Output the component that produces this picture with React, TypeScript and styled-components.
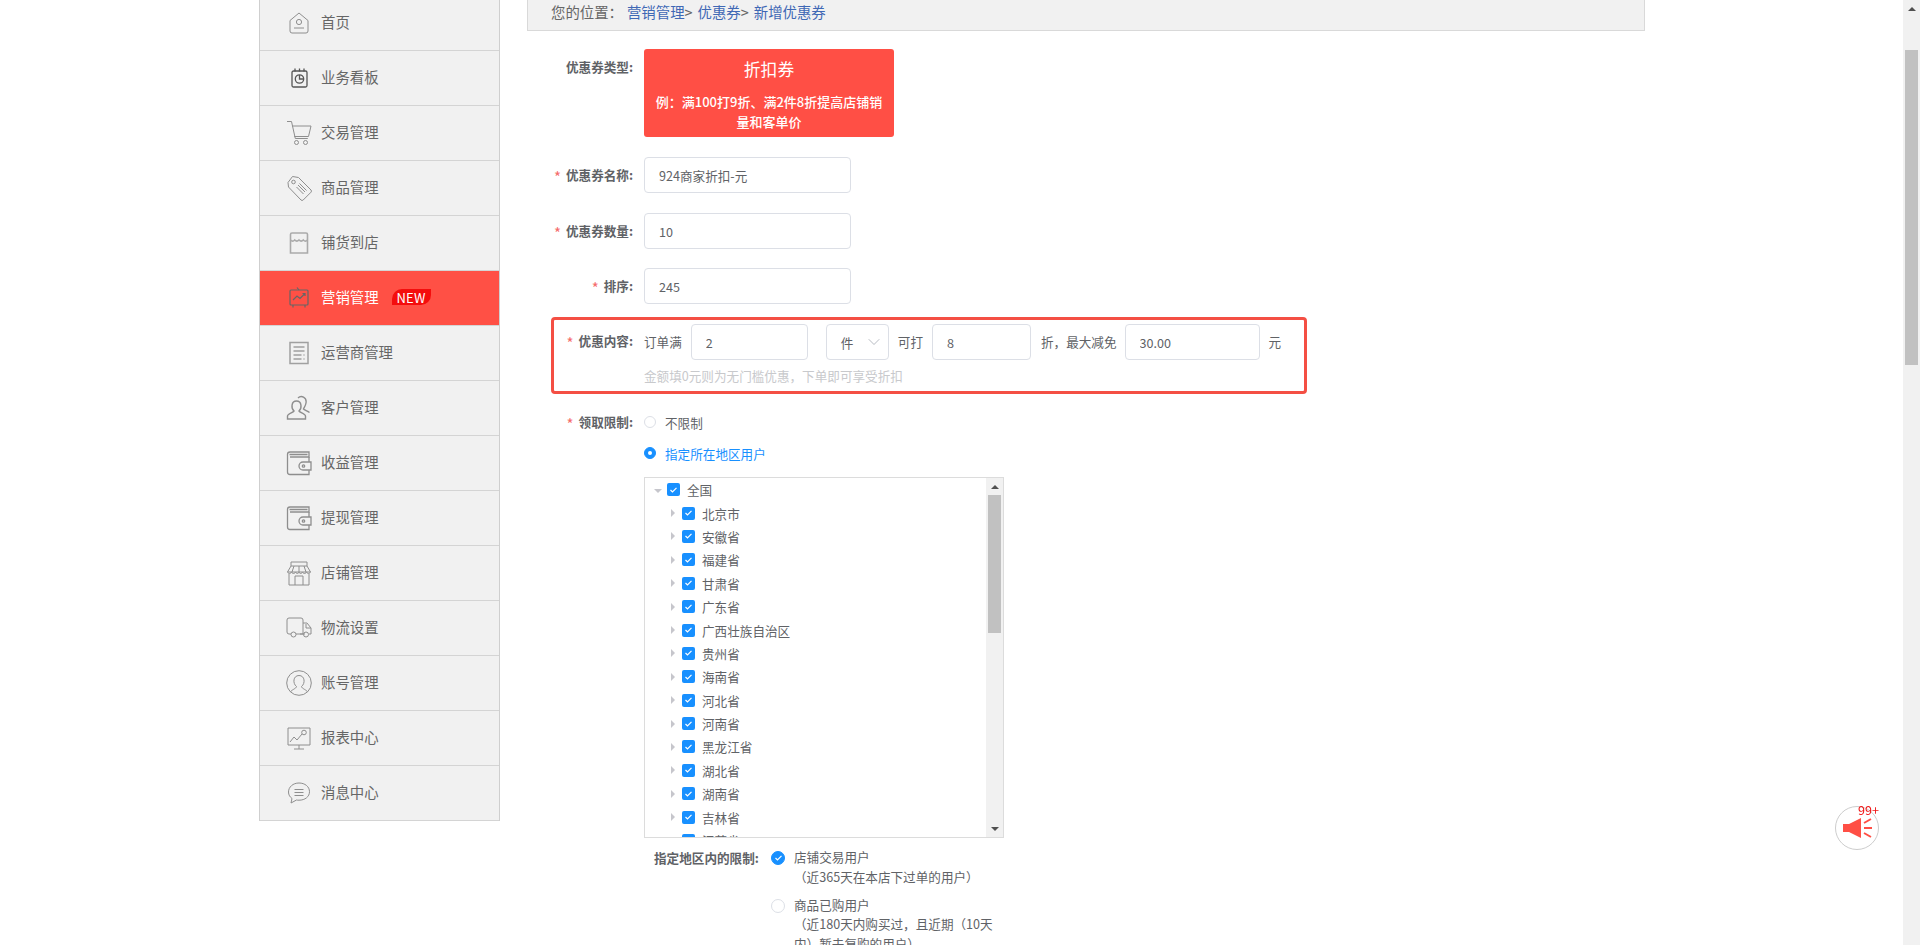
import React from 'react';
import styled, { createGlobalStyle } from 'styled-components';
import { ChevronDown } from 'lucide-react';

const GlobalStyle = createGlobalStyle`
  html, body {
    margin: 0;
    height: 100%;
    overflow: hidden;
    background: #fff;
  }
  * {
    box-sizing: border-box;
  }
  body, input {
    font-family: "Noto Sans CJK SC", "Noto Sans", sans-serif;
    font-size: 12.6px;
    color: #606266;
  }
`;

const Root = styled.div`
  display: flex;
  height: 945px;
  overflow: hidden;
`;

const Page = styled.div`
  flex: 1;
  display: flex;
  align-items: flex-start;
  padding-left: 259px;
  overflow: hidden;
`;

const Sidebar = styled.nav`
  width: 241px;
  margin-top: -4px;
  flex-shrink: 0;
  border-left: 1px solid #cfcfcf;
  border-right: 1px solid #cfcfcf;
`;

const MenuRow = styled.div<{ $active?: boolean }>`
  height: 55px;
  display: flex;
  align-items: center;
  gap: 9px;
  padding-left: 26px;
  font-size: 14.4px;
  color: ${({ $active }) => ($active ? '#fff' : '#666')};
  background: ${({ $active }) => ($active ? '#ff5045' : '#f1f1f1')};
  border-bottom: 1px solid #d4d4d4;
  svg {
    flex-shrink: 0;
  }
`;

const MenuLabel = styled.span`
  padding-bottom: 3px;
`;

const NewBadge = styled.span`
  display: inline-flex;
  align-items: center;
  justify-content: center;
  width: 39px;
  height: 16px;
  margin: 0 0 2px 4px;
  font-size: 13px;
  letter-spacing: 0.3px;
  color: #fff;
  background: #f40d0d;
  border-radius: 10px 0 10px 0;
`;

const Main = styled.main`
  width: 1118px;
  margin-left: 27px;
  flex-shrink: 0;
`;

const Breadcrumb = styled.div`
  height: 31px;
  display: flex;
  align-items: center;
  padding: 0 0 7px 23px;
  font-size: 14.4px;
  color: #666;
  background: #f1f1f1;
  border: 1px solid #d9d9d9;
  border-top: none;
`;

const Crumb = styled.span`
  margin-left: 5px;
  color: #3f68b5;
  em {
    font-style: normal;
    color: #666;
  }
  &:first-of-type {
    margin-left: 4px;
  }
`;

const Form = styled.form`
  padding-top: 18px;
`;

const FormRow = styled.div<{ $mb?: number }>`
  display: flex;
  align-items: flex-start;
  margin-bottom: ${({ $mb }) => $mb ?? 20}px;
`;

const Label = styled.div<{ $width?: number; $line?: number }>`
  width: ${({ $width }) => $width ?? 117}px;
  flex-shrink: 0;
  padding-right: 11px;
  text-align: right;
  line-height: ${({ $line }) => $line ?? 36}px;
  font-weight: 700;
  color: #606266;
  i {
    margin-right: 5px;
    font-size: 15px;
    line-height: 0;
    vertical-align: -3px;
    font-style: normal;
    font-weight: 400;
    color: #f56c6c;
  }
`;

const TypeCard = styled.div`
  width: 250px;
  height: 88px;
  padding: 8px 6px 0;
  text-align: center;
  color: #fff;
  background: #ff4f45;
  border-radius: 3px;
`;

const TypeTitle = styled.div`
  font-size: 16.8px;
  line-height: 24px;
  margin-bottom: 11px;
`;

const TypeDesc = styled.div`
  font-size: 13px;
  font-weight: 500;
  line-height: 20px;
`;

const TextInput = styled.input<{ $width?: number; $ml?: number }>`
  width: ${({ $width }) => $width ?? 207}px;
  height: 36px;
  margin-left: ${({ $ml }) => $ml ?? 0}px;
  padding: 0 14px;
  flex-shrink: 0;
  font-size: 12.6px;
  color: #606266;
  background: #fff;
  border: 1px solid #dcdfe6;
  border-radius: 4px;
  outline: none;
`;

const Highlight = styled.div`
  width: 756px;
  height: 77px;
  margin: 0 0 18px 24px;
  padding-top: 4px;
  border: 3px solid #f44f44;
  border-radius: 4px;
`;

const HighlightInner = styled.div`
  display: flex;
  align-items: flex-start;
`;

const ContentColumn = styled.div`
  display: flex;
  flex-direction: column;
`;

const InlineFields = styled.div`
  display: flex;
  align-items: center;
  height: 36px;
`;

const InlineText = styled.span<{ $ml?: number }>`
  margin-left: ${({ $ml }) => $ml ?? 0}px;
  padding-bottom: 2px;
  white-space: nowrap;
  color: #606266;
`;

const UnitSelect = styled.div`
  width: 63px;
  height: 36px;
  margin-left: 18px;
  display: flex;
  align-items: center;
  justify-content: space-between;
  padding: 0 4px 0 14px;
  color: #606266;
  border: 1px solid #dcdfe6;
  border-radius: 4px;
`;

const Hint = styled.div`
  margin-top: 6px;
  line-height: 20px;
  color: #c8c9cc;
`;

const RadioRow = styled.div<{ $active?: boolean; $mb?: number }>`
  height: 20px;
  display: flex;
  align-items: center;
  gap: 9px;
  margin-bottom: ${({ $mb }) => $mb ?? 0}px;
  color: ${({ $active }) => ($active ? '#1890ff' : '#606266')};
`;

const RadioDot = styled.span<{ $checked?: boolean }>`
  width: 12px;
  height: 12px;
  flex-shrink: 0;
  display: inline-flex;
  align-items: center;
  justify-content: center;
  border-radius: 50%;
  border: 1px solid ${({ $checked }) => ($checked ? '#1890ff' : '#dcdfe6')};
  background: ${({ $checked }) => ($checked ? '#1890ff' : '#fff')};
  &::after {
    content: '';
    display: ${({ $checked }) => ($checked ? 'block' : 'none')};
    width: 4px;
    height: 4px;
    border-radius: 50%;
    background: #fff;
  }
`;

const TreeBox = styled.div`
  width: 360px;
  height: 361px;
  margin-top: 14px;
  display: flex;
  border: 1px solid #dcdcdc;
  overflow: hidden;
`;

const TreeList = styled.div`
  flex: 1;
  overflow: hidden;
`;

const TreeNode = styled.div<{ $depth: number }>`
  height: 23.4px;
  display: flex;
  align-items: center;
  padding-left: ${({ $depth }) => ($depth ? 26 : 9)}px;
  color: #606266;
`;

const TreeRight = styled.span`
  width: 0;
  height: 0;
  margin-right: 7px;
  border-top: 4px solid transparent;
  border-bottom: 4px solid transparent;
  border-left: 4px solid #c6c6cc;
`;

const TreeDown = styled.span`
  width: 0;
  height: 0;
  margin-right: 5px;
  margin-top: 2px;
  border-left: 4px solid transparent;
  border-right: 4px solid transparent;
  border-top: 4px solid #c6c6cc;
`;

const CheckBox = styled.span`
  width: 13px;
  height: 13px;
  margin-right: 7px;
  display: inline-flex;
  align-items: center;
  justify-content: center;
  flex-shrink: 0;
  background: #1890ff;
  border-radius: 2px;
`;

const ScrollTrack = styled.div`
  width: 17px;
  flex-shrink: 0;
  height: 100%;
  display: flex;
  flex-direction: column;
  align-items: center;
  background: #f1f1f1;
`;

const ScrollArrow = styled.div<{ $down?: boolean }>`
  height: 17px;
  width: 100%;
  flex-shrink: 0;
  display: flex;
  align-items: center;
  justify-content: center;
  margin-top: ${({ $down }) => ($down ? 'auto' : '0')};
  &::after {
    content: '';
    width: 0;
    height: 0;
    border-left: 4px solid transparent;
    border-right: 4px solid transparent;
    ${({ $down }) =>
      $down ? 'border-top: 4px solid #505050;' : 'border-bottom: 4px solid #505050;'}
  }
`;

const ScrollThumb = styled.div<{ $top: number; $height: number }>`
  width: 13px;
  height: ${({ $height }) => $height}px;
  margin-top: ${({ $top }) => $top}px;
  flex-shrink: 0;
  background: #c1c1c1;
`;

const RestrictRow = styled.div`
  display: flex;
  align-items: flex-start;
  margin: 11px 0 0 10px;
`;

const RestrictLabel = styled.div`
  width: 117px;
  flex-shrink: 0;
  font-weight: 700;
  line-height: 18px;
  white-space: nowrap;
`;

const RestrictOptions = styled.div`
  width: 232px;
  display: flex;
  flex-direction: column;
  gap: 10px;
`;

const RestrictOption = styled.div`
  display: flex;
  gap: 9px;
`;

const RoundTick = styled.span<{ $checked?: boolean }>`
  width: 14px;
  height: 14px;
  margin-top: 2px;
  flex-shrink: 0;
  display: inline-flex;
  align-items: center;
  justify-content: center;
  border-radius: 50%;
  border: 1px solid ${({ $checked }) => ($checked ? '#1890ff' : '#dcdfe6')};
  background: ${({ $checked }) => ($checked ? '#1890ff' : '#fff')};
`;

const OptionText = styled.div`
  width: 209px;
  margin-top: -2px;
  line-height: 19.8px;
  color: #606266;
`;

const FloatButton = styled.div`
  position: fixed;
  left: 1835px;
  top: 806px;
  width: 44px;
  height: 44px;
  display: flex;
  align-items: center;
  justify-content: center;
  background: #fff;
  border: 1px solid #ccc;
  border-radius: 50%;
`;

const FloatCount = styled.span`
  position: absolute;
  top: -4px;
  right: -1px;
  font-size: 12.6px;
  line-height: 14px;
  color: #f01414;
`;

const Tick = () => (
  <svg width="9" height="8" viewBox="0 0 9 8">
    <path d="M1.5 4l2 2 4-4.2" fill="none" stroke="#fff" strokeWidth="1.2" />
  </svg>
);

const icons: Record<string, React.ReactNode> = {
  home: (
    <>
      <path d="M4 10.5 13 3l9 7.5V21a2 2 0 0 1-2 2H6a2 2 0 0 1-2-2z" />
      <circle cx="13" cy="12" r="2.6" />
      <path d="M8 18h10" />
    </>
  ),
  board: (
    <g stroke="#555" strokeWidth="1.3">
      <rect x="6" y="6" width="15" height="16" rx="1.5" />
      <path d="M9 3.5v3M13.5 3.5v3M18 3.5v3" />
      <circle cx="13.5" cy="14" r="4.2" />
      <path d="M13.5 10v4h4" />
    </g>
  ),
  cart: (
    <>
      <path d="M1 1.5h4.5l3.8 17h12.5" />
      <path d="M6 6h19l-2.5 10.5H8.3" />
      <circle cx="10.5" cy="22.5" r="2" />
      <circle cx="19.5" cy="22.5" r="2" />
    </>
  ),
  tag: (
    <>
      <path d="M2 7.5 6.5 1.5l6 1 12.5 12.5a1.6 1.6 0 0 1 0 2.2l-7.8 7.8a1.6 1.6 0 0 1-2.2 0L2.5 12z" />
      <circle cx="7.5" cy="7" r="1.8" />
      <path d="m12 10 7 7M10.5 12l7 7M13.5 8.500l7 7" />
    </>
  ),
  store: (
    <g stroke="#aaa" strokeWidth="1.6">
      <path d="M4.500 10V4.500A1.500 1.500 0 0 1 6 3h14a1.500 1.500 0 0 1 1.500 1.500V10" />
      <path d="M4.500 10c1.500 1.500 2.800 1.500 4.200 0 1.500 1.500 2.800 1.500 4.300 0 1.500 1.500 2.800 1.500 4.300 0 1.500 1.500 2.800 1.500 4.200 0" />
      <path d="M4.500 10v13h17V10" />
    </g>
  ),
  market: (
    <g stroke="#666" strokeWidth="1.2">
      <rect x="4" y="5" width="18" height="15" rx="1" />
      <path d="M13 5l-2-2.500M7 20v2.500M19 20v2.500" />
      <path d="m7 15 4-4 3 2.500 5-5M16.500 8.500H19V11" />
    </g>
  ),
  doc: (
    <g stroke="#a0a0a0" strokeWidth="1.5">
      <rect x="4" y="2.500" width="18" height="21" />
      <path d="M7.500 7h11M7.500 11h11M7.500 15h8M17.500 15h1M7.500 19h8M17.500 19h1" />
    </g>
  ),
  users: (
    <g strokeWidth="1.4">
      <path d="M1.500 24v-3c0-2 5.500-3.500 6.500-5-3-2.500-3-10 2.500-10S16 13.500 13 16c1 1.500 6.500 3 6.500 5v3z" />
      <path d="M12 3c3-3 9-1 8 5-.5 3-2 4.500-2.500 6 1 1 4 2 6 3.500" />
    </g>
  ),
  wallet: (
    <g strokeWidth="1.3">
      <path d="M1.500 4.500A2.500 2.500 0 0 1 4 2h19v5H4M1.500 4.500V22A2.500 2.500 0 0 0 4 24.500h19V20" />
      <path d="M3.500 4.500h18M25 12h-8a3 3 0 0 0 0 8h8zM23 12V7" />
      <circle cx="17.500" cy="16" r="1.200" />
    </g>
  ),
  shop: (
    <>
      <path d="M5 6V2h16v4M5 6h16l3.500 6H1.500z" />
      <path d="M1.500 12c1 2 3 2 4 0 1 2 3 2 4 0 1 2 3 2 3.500 0 .5 2 2.500 2 3.500 0 1 2 3 2 4 0 1 2 3 2 4 0M8 6l-2 6M13 6v6M18 6l2 6" />
      <path d="M3 14v11h20V14M9 25V16h8v9" />
    </>
  ),
  truck: (
    <>
      <path d="M5 19H3a2 2 0 0 1-2-2V5a2 2 0 0 1 2-2h12a2 2 0 0 1 2 2v14h-7M17 8h4l4 5v6h-2" />
      <path d="M20 9v4h5M14 19h5" />
      <circle cx="7.500" cy="19.500" r="2.500" />
      <circle cx="20" cy="19.500" r="2.500" />
    </>
  ),
  account: (
    <>
      <circle cx="13" cy="13" r="12.300" />
      <path d="M4.500 22c.5-2 6-3.500 6-5.500-4-3-3.500-11 2.500-11s6.500 8 2.500 11c0 2 5.500 3.500 6 5.500" />
    </>
  ),
  report: (
    <>
      <path d="M2 3h22v17H2zM13 20v4M8 24h10" />
      <path d="m4 17 4-5 3 3 5-6" />
      <circle cx="18" cy="7.500" r="2.300" />
    </>
  ),
  chat: (
    <>
      <path d="M13 3C7 3 2.500 7 2.500 12c0 3 1.500 5 3.500 6.500L5 23l5.500-3c1 .2 1.500 .2 2.500 .2 6 0 10.500-3.500 10.500-8.500S19 3 13 3z" />
      <path d="M8.500 9.500h9M8.500 12.500h9M8.500 15.500h9" />
    </>
  ),
};

const MenuIcon = ({ name }: { name: string }) => (
  <svg width="26" height="26" viewBox="0 0 26 26" fill="none" stroke="#8e8e8e" strokeWidth="1">
    {icons[name]}
  </svg>
);

const menu = [
  ['home', '首页'],
  ['board', '业务看板'],
  ['cart', '交易管理'],
  ['tag', '商品管理'],
  ['store', '铺货到店'],
  ['market', '营销管理'],
  ['doc', '运营商管理'],
  ['users', '客户管理'],
  ['wallet', '收益管理'],
  ['wallet', '提现管理'],
  ['shop', '店铺管理'],
  ['truck', '物流设置'],
  ['account', '账号管理'],
  ['report', '报表中心'],
  ['chat', '消息中心'],
];

const provinces = [
  '北京市', '安徽省', '福建省', '甘肃省', '广东省', '广西壮族自治区', '贵州省',
  '海南省', '河北省', '河南省', '黑龙江省', '湖北省', '湖南省', '吉林省', '江苏省',
];

export default function App() {
  return (
    <Root>
      <GlobalStyle />
      <Page>
        <Sidebar>
          {menu.map(([icon, label]) => (
            <MenuRow key={label} $active={label === '营销管理'}>
              <MenuIcon name={icon} />
              <MenuLabel>{label}</MenuLabel>
              {label === '营销管理' && <NewBadge>NEW</NewBadge>}
            </MenuRow>
          ))}
        </Sidebar>
        <Main>
          <Breadcrumb>
            您的位置：
            <Crumb>营销管理<em>&gt;</em></Crumb>
            <Crumb>优惠券<em>&gt;</em></Crumb>
            <Crumb>新增优惠券</Crumb>
          </Breadcrumb>
          <Form>
            <FormRow>
              <Label>优惠券类型:</Label>
              <TypeCard>
                <TypeTitle>折扣券</TypeTitle>
                <TypeDesc>例：满100打9折、满2件8折提高店铺销量和客单价</TypeDesc>
              </TypeCard>
            </FormRow>
            <FormRow>
              <Label><i>*</i>优惠券名称:</Label>
              <TextInput readOnly defaultValue="924商家折扣-元" />
            </FormRow>
            <FormRow $mb={19}>
              <Label><i>*</i>优惠券数量:</Label>
              <TextInput readOnly defaultValue="10" />
            </FormRow>
            <FormRow $mb={13}>
              <Label><i>*</i>排序:</Label>
              <TextInput readOnly defaultValue="245" />
            </FormRow>
            <Highlight>
              <HighlightInner>
                <Label $width={90} $line={34}><i>*</i>优惠内容:</Label>
                <ContentColumn>
                  <InlineFields>
                    <InlineText>订单满</InlineText>
                    <TextInput readOnly defaultValue="2" $width={117} $ml={9} />
                    <UnitSelect>
                      件
                      <ChevronDown size={20} strokeWidth={1} color="#a8adb6" />
                    </UnitSelect>
                    <InlineText $ml={9}>可打</InlineText>
                    <TextInput readOnly defaultValue="8" $width={99} $ml={9} />
                    <InlineText $ml={10}>折，最大减免</InlineText>
                    <TextInput readOnly defaultValue="30.00" $width={135} $ml={8} />
                    <InlineText $ml={9}>元</InlineText>
                  </InlineFields>
                  <Hint>金额填0元则为无门槛优惠，下单即可享受折扣</Hint>
                </ContentColumn>
              </HighlightInner>
            </Highlight>
            <FormRow $mb={0}>
              <Label $line={20}><i>*</i>领取限制:</Label>
              <ContentColumn>
                <RadioRow $mb={11}>
                  <RadioDot />
                  不限制
                </RadioRow>
                <RadioRow $active>
                  <RadioDot $checked />
                  指定所在地区用户
                </RadioRow>
                <TreeBox>
                  <TreeList>
                    <TreeNode $depth={0}>
                      <TreeDown />
                      <CheckBox><Tick /></CheckBox>
                      全国
                    </TreeNode>
                    {provinces.map((name) => (
                      <TreeNode key={name} $depth={1}>
                        <TreeRight />
                        <CheckBox><Tick /></CheckBox>
                        {name}
                      </TreeNode>
                    ))}
                  </TreeList>
                  <ScrollTrack>
                    <ScrollArrow />
                    <ScrollThumb $top={0} $height={138} />
                    <ScrollArrow $down />
                  </ScrollTrack>
                </TreeBox>
                <RestrictRow>
                  <RestrictLabel>指定地区内的限制:</RestrictLabel>
                  <RestrictOptions>
                    <RestrictOption>
                      <RoundTick $checked><Tick /></RoundTick>
                      <OptionText>
                        店铺交易用户
                        <br />
                        （近365天在本店下过单的用户）
                      </OptionText>
                    </RestrictOption>
                    <RestrictOption>
                      <RoundTick />
                      <OptionText>
                        商品已购用户
                        <br />
                        （近180天内购买过，且近期（10天内）暂未复购的用户）
                      </OptionText>
                    </RestrictOption>
                  </RestrictOptions>
                </RestrictRow>
              </ContentColumn>
            </FormRow>
          </Form>
        </Main>
      </Page>
      <ScrollTrack>
        <ScrollArrow />
        <ScrollThumb $top={33} $height={315} />
      </ScrollTrack>
      <FloatButton>
        <FloatCount>99+</FloatCount>
        <svg width="32" height="24" viewBox="0 0 32 24">
          <path d="M2 8h6l12-6v20L8 16H2z" fill="#ff4f45" />
          <path d="m23 7 7-4M23 12h8M23 17l7 4" stroke="#ff4f45" strokeWidth="2" fill="none" />
        </svg>
      </FloatButton>
    </Root>
  );
}
